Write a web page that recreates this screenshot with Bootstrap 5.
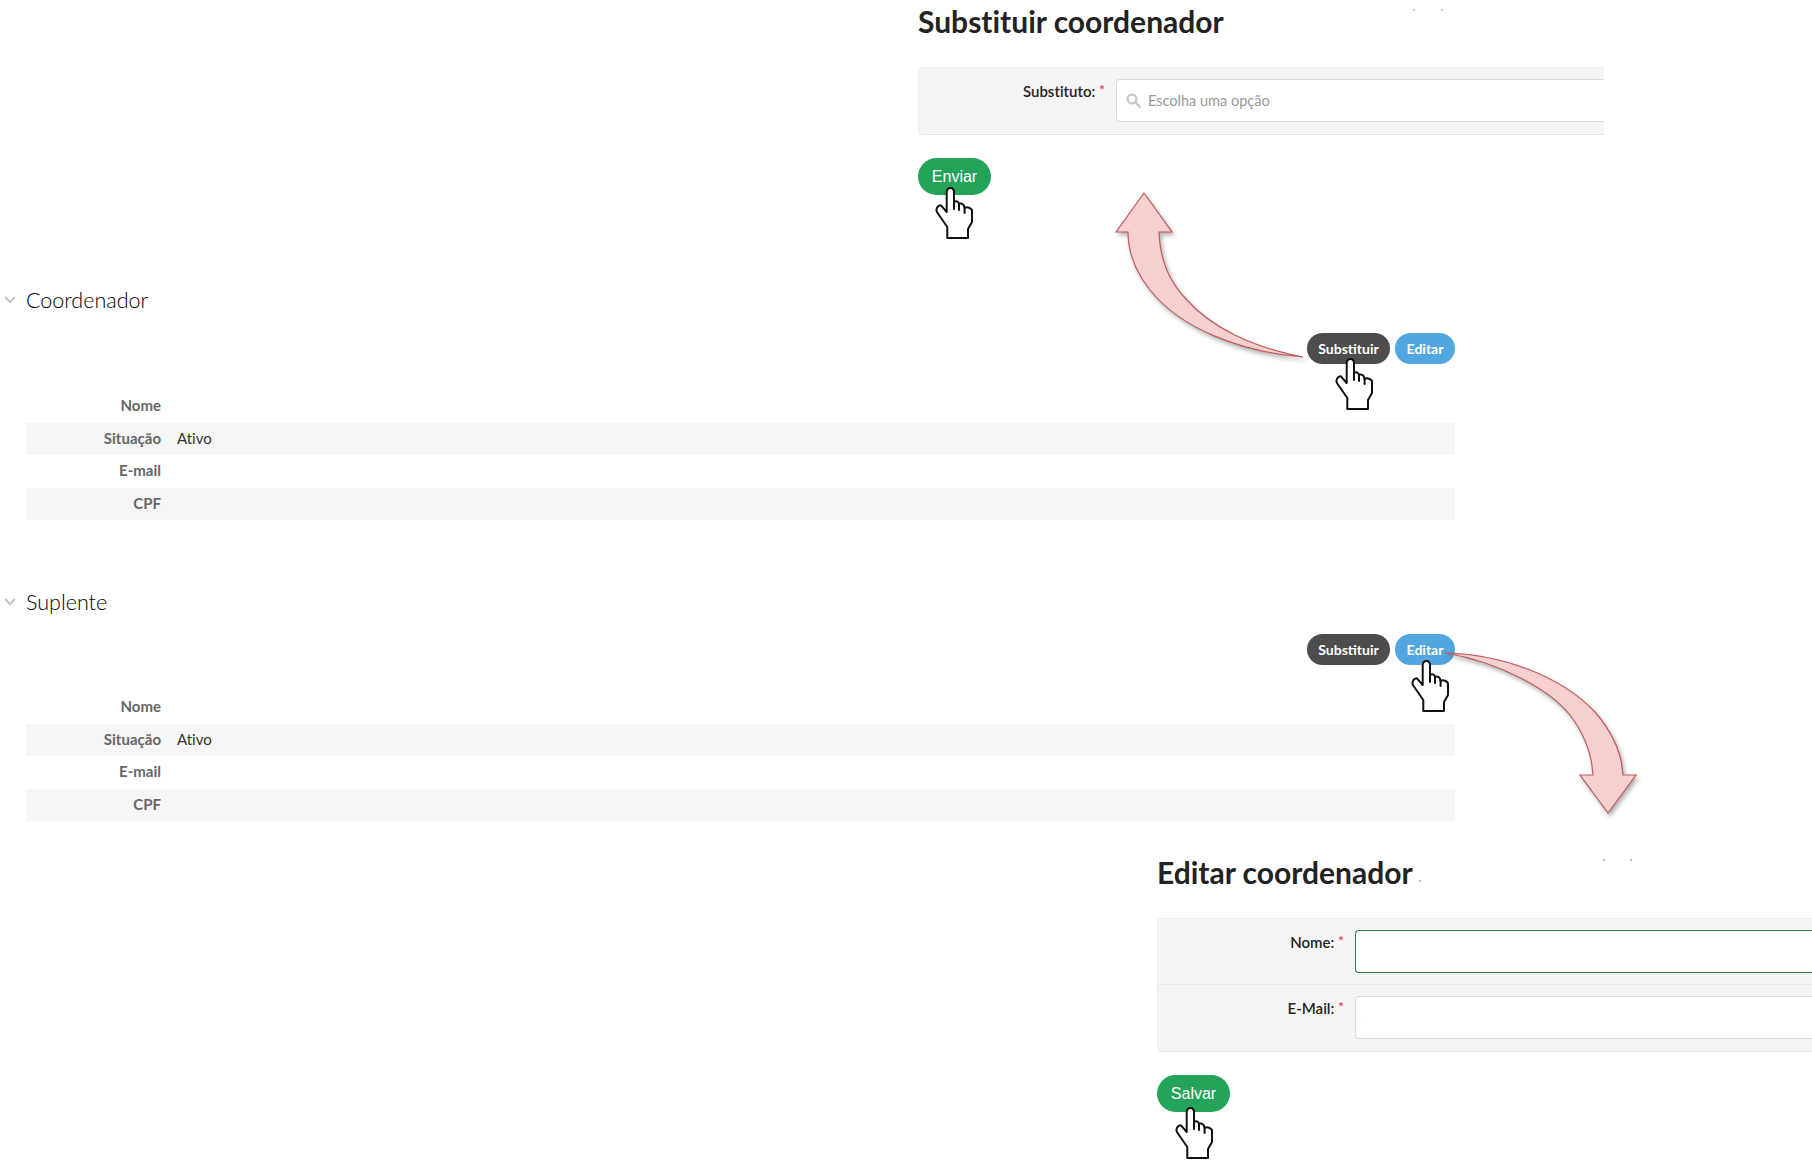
<!DOCTYPE html>
<html lang="pt-BR">
<head>
    <meta charset="UTF-8">
    <meta name="viewport" content="width=device-width, initial-scale=1.0">
    <title>Coordenador e suplente</title>
    <link href="https://cdn.jsdelivr.net/npm/bootstrap@5.3.0/dist/css/bootstrap.min.css" rel="stylesheet">
    <style>
        html, body { overflow: hidden; }
        body { font-family: Lato, "Liberation Sans", sans-serif; font-variant-ligatures: none; color: #222; background: #fff; height: 1168px; position: relative; }
        .form-title { font-size: 30px; font-weight: 700; line-height: 40px; color: #222; margin: 0; }
        .form-block-top { margin-left: 918px; width: 686px; padding-top: 1px; }
        .form-block-edit { margin-left: 1157px; width: 800px; padding-top: 31px; }
        .title-gap { height: 26px; }
        .form-panel { background: #f5f5f5; border: 1px solid #eee; border-bottom-color: #e4e4e4; border-radius: 4px; }
        .form-block-top .form-panel { border-right: 0; border-radius: 4px 0 0 4px; overflow: hidden; }
        .form-line { padding: 11px 0 11px 0; }
        .form-line:last-child { padding-bottom: 12px; }
        .form-line + .form-line { border-top: 1px solid #e8e8e8; }
        .form-label-col { width: 197px; flex: none; padding: 1px 11px 0 0; text-align: right; font-size: 15px; font-weight: 600; line-height: 20px; color: #222; }
        .req-star { color: #e0454f; font-size: 14px; vertical-align: 2px; }
        .field-box { flex: 1; height: 43px; background: #fff; border: 1px solid #d9d9d9; border-radius: 4px 0 0 4px; border-right: 0; }
        .field-box.is-focused { border-color: #2e7d46; }
        .field-search { gap: 7px; padding-left: 9px; }
        .field-hint { color: #999; font-size: 14.5px; }
        .send-btn { background: #23a45a; border: 0; color: #fff; font-family: "Liberation Sans", sans-serif; font-size: 16px; line-height: 37px; height: 37px; width: 73px; padding: 0; margin-top: 23px; }
        .data-section { margin-left: 4px; width: 1451px; }
        .sec-head { gap: 10px; height: 30px; font-size: 21.5px; font-weight: 300; line-height: 30px; color: #000; }
        .sec-actions { gap: 5px; margin-top: 18px; margin-left: 22px; }
        .act-btn { height: 31px; padding: 0; font-size: 14px; font-weight: 700; line-height: 31px; color: #fff; border: 0; }
        .act-dark { background: #4d4d4d; width: 83px; }
        .act-blue { background: #52a7e0; width: 60px; }
        .info-table { margin: 26px 0 0 22px; width: 1429px; font-size: 15px; }
        .info-table th, .info-table td { padding: 0 0 2px; height: 32.5px; line-height: 20px; vertical-align: middle; background: transparent; box-shadow: none; }
        .info-table th { width: 135px; text-align: right; font-weight: 700; color: #666; }
        .info-table td { padding-left: 16px; color: #333; }
        .info-table tr:nth-child(even) th, .info-table tr:nth-child(even) td { background: #f6f6f6; }
        .overlay-art { position: absolute; left: 0; top: 0; pointer-events: none; }
        .arrow-shape { fill: #f6cfcf; stroke: #bc5c5c; stroke-width: 1.2; filter: drop-shadow(2px 3px 2px rgba(0,0,0,.3)); }
        .hand-shape { fill: #fff; stroke: #111; stroke-width: 2; stroke-linejoin: round; stroke-linecap: round; }
    </style>
</head>
<body>
    <div class="form-block-top">
        <h2 class="form-title">Substituir coordenador</h2>
        <div class="title-gap"></div>
        <div class="form-panel">
            <div class="form-line d-flex">
                <div class="form-label-col">Substituto: <span class="req-star">*</span></div>
                <div class="field-box field-search d-flex align-items-center">
                    <svg width="15" height="15" viewBox="0 0 15 15" fill="none" stroke="#c8c8c8" stroke-width="2.2"><circle cx="6" cy="6" r="4.4"/><path d="M9.4 9.4 14 14" stroke-linecap="round"/></svg>
                    <span class="field-hint">Escolha uma opção</span>
                </div>
            </div>
        </div>
        <button type="button" class="btn send-btn rounded-pill">Enviar</button>
    </div>

    <section class="data-section" style="margin-top: 90px">
        <div class="sec-head d-flex align-items-center">
            <svg width="12" height="8" viewBox="0 0 12 8" fill="none" stroke="#c4c4c4" stroke-width="2"><path d="M1 1l5 5 5-5"/></svg>
            <span>Coordenador</span>
        </div>
        <div class="sec-actions d-flex justify-content-end">
            <button type="button" class="btn act-btn act-dark rounded-pill">Substituir</button>
            <button type="button" class="btn act-btn act-blue rounded-pill">Editar</button>
        </div>
        <table class="table table-borderless info-table">
            <tbody>
                <tr><th>Nome</th><td></td></tr>
                <tr><th>Situação</th><td>Ativo</td></tr>
                <tr><th>E-mail</th><td></td></tr>
                <tr><th>CPF</th><td></td></tr>
            </tbody>
        </table>
    </section>

    <section class="data-section" style="margin-top: 67px">
        <div class="sec-head d-flex align-items-center">
            <svg width="12" height="8" viewBox="0 0 12 8" fill="none" stroke="#c4c4c4" stroke-width="2"><path d="M1 1l5 5 5-5"/></svg>
            <span>Suplente</span>
        </div>
        <div class="sec-actions d-flex justify-content-end" style="margin-top: 17px">
            <button type="button" class="btn act-btn act-dark rounded-pill">Substituir</button>
            <button type="button" class="btn act-btn act-blue rounded-pill">Editar</button>
        </div>
        <table class="table table-borderless info-table">
            <tbody>
                <tr><th>Nome</th><td></td></tr>
                <tr><th>Situação</th><td>Ativo</td></tr>
                <tr><th>E-mail</th><td></td></tr>
                <tr><th>CPF</th><td></td></tr>
            </tbody>
        </table>
    </section>

    <div class="form-block-edit">
        <h2 class="form-title">Editar coordenador</h2>
        <div class="title-gap"></div>
        <div class="form-panel">
            <div class="form-line d-flex">
                <div class="form-label-col">Nome: <span class="req-star">*</span></div>
                <div class="field-box is-focused"></div>
            </div>
            <div class="form-line d-flex">
                <div class="form-label-col">E-Mail: <span class="req-star">*</span></div>
                <div class="field-box"></div>
            </div>
        </div>
        <button type="button" class="btn send-btn rounded-pill">Salvar</button>
    </div>

    <!-- setas e cursores desenhados por cima da tela -->
    <svg class="overlay-art" width="1812" height="1168" viewBox="0 0 1812 1168">
        <defs>
            <g id="hand">
                <path class="hand-shape" d="M11.3 50V39L.9 24C-.4 21 1.5 17.5 4.7 17.2L10.7 24V4.5C10.7 1.5 12.5 0 14.5 0S18 1.5 18 4.5V14C20 12.6 22.5 13 23 16C25 14.8 28 15.6 28.6 20C30.5 18.6 36 19.6 36 23V34L32 41V50Z"/>
                <path class="hand-shape" d="M18 14V21M23 16V22M28.6 20V25" fill="none"/>
            </g>
        </defs>
        <path class="arrow-shape" d="M1144 193 1172 232H1159C1160 262 1172 285 1187 300C1210 326 1250 347 1303 357C1240 352 1180 328 1150 290C1134 270 1128 252 1128 232H1116Z"/>
        <path class="arrow-shape" d="M1445 653C1500 654 1560 675 1595 712C1613 733 1622 755 1623 775H1636L1608 813 1580 775H1593C1592 755 1585 735 1570 715C1550 690 1500 662 1445 653Z"/>
        <use href="#hand" x="936" y="188"/>
        <use href="#hand" x="1336" y="359"/>
        <use href="#hand" x="1412" y="661"/>
        <use href="#hand" x="1176" y="1108"/>
        <g fill="#777">
            <circle cx="1414" cy="10" r=".8"/><circle cx="1442" cy="10" r=".8"/>
            <circle cx="1604" cy="860" r=".8"/><circle cx="1631" cy="860" r=".8"/>
            <circle cx="1420" cy="881" r=".8"/>
        </g>
        <circle cx="1365" cy="1020" r=".6" fill="#e8c9a0"/>
    </svg>
</body>
</html>
